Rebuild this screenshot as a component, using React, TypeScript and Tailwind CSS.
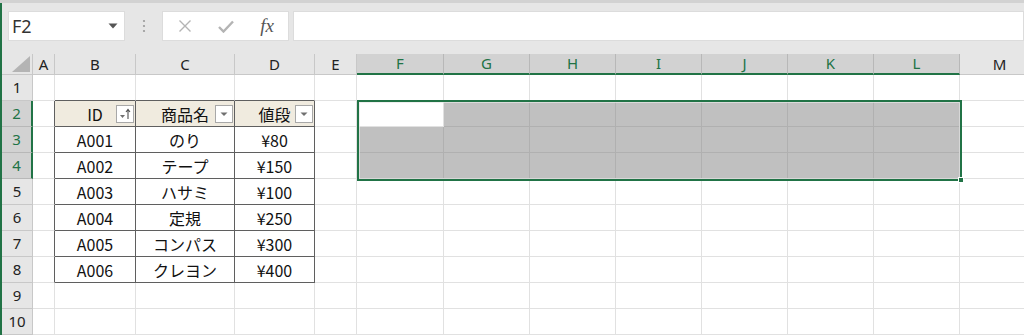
import React from 'react';

const COLS = [
  { key: 'A', w: 22 },
  { key: 'B', w: 81 },
  { key: 'C', w: 99 },
  { key: 'D', w: 80 },
  { key: 'E', w: 42 },
  { key: 'F', w: 87 },
  { key: 'G', w: 86 },
  { key: 'H', w: 86 },
  { key: 'I', w: 86 },
  { key: 'J', w: 86 },
  { key: 'K', w: 86 },
  { key: 'L', w: 86 },
  { key: 'M', w: 80 },
];

const ROWS = [1, 2, 3, 4, 5, 6, 7, 8, 9, 10];

const DATA: Record<number, [string, string, string]> = {
  3: ['A001', 'のり', '¥80'],
  4: ['A002', 'テープ', '¥150'],
  5: ['A003', 'ハサミ', '¥100'],
  6: ['A004', '定規', '¥250'],
  7: ['A005', 'コンパス', '¥300'],
  8: ['A006', 'クレヨン', '¥400'],
};

const SEL_COLS = ['F', 'G', 'H', 'I', 'J', 'K', 'L'];
const SEL_ROWS = [2, 3, 4];

const uiFont = { fontFamily: '"Noto Sans", "Liberation Sans", sans-serif' };
const cellFont = { fontFamily: '"Noto Sans CJK JP", "Noto Sans", sans-serif' };

function FilterButton({ sorted }: { sorted?: boolean }) {
  return (
    <div className="absolute right-[1px] top-[4px] flex h-[18px] w-[18px] items-center justify-center border border-[#a8a8a8] bg-white">
      {sorted ? (
        <svg width="14" height="12" viewBox="0 0 14 12">
          <path d="M2 7h5l-2.5 3z" fill="#707070" />
          <path d="M10 11V2M8 4l2-2.5L12 4" stroke="#505050" strokeWidth="1.1" fill="none" />
        </svg>
      ) : (
        <svg width="10" height="6" viewBox="0 0 10 6">
          <path d="M1.5 1.5h7l-3.5 3.5z" fill="#707070" />
        </svg>
      )}
    </div>
  );
}

function Cell({ col, row }: { col: string; row: number }) {
  const inTable = ['B', 'C', 'D'].includes(col) && row >= 2 && row <= 8;
  const selected = SEL_COLS.includes(col) && SEL_ROWS.includes(row);
  const active = col === 'F' && row === 2;

  const rightDark = inTable || (col === 'A' && row >= 2 && row <= 8);
  const bottomDark = inTable || (row === 1 && ['B', 'C', 'D'].includes(col));

  let bg = 'bg-white';
  if (selected && !active) bg = 'bg-[#c0c0c0]';
  if (inTable && row === 2) bg = 'bg-[#f0ebdf]';

  const rightCls = rightDark
    ? 'border-r-[#5f5f5f]'
    : selected && !active
      ? 'border-r-[#b0b0b0]'
      : 'border-r-[#e1e1e1]';
  const bottomCls = bottomDark
    ? 'border-b-[#5f5f5f]'
    : selected && !active
      ? 'border-b-[#b0b0b0]'
      : 'border-b-[#e1e1e1]';

  let content: React.ReactNode = null;
  if (inTable && row === 2) {
    const label = col === 'B' ? 'ID' : col === 'C' ? '商品名' : '値段';
    content = (
      <>
        <span className="w-full text-center">{label}</span>
        <FilterButton sorted={col === 'B'} />
      </>
    );
  } else if (inTable && DATA[row]) {
    const idx = col === 'B' ? 0 : col === 'C' ? 1 : 2;
    content = <span className="w-full text-center">{DATA[row][idx]}</span>;
  }

  return (
    <div
      className={`relative flex h-[26px] items-center border-r border-b text-[16px] text-[#111] ${bg} ${rightCls} ${bottomCls}`}
      style={cellFont}
    >
      {content}
    </div>
  );
}

export default function App() {
  return (
    <div className="h-[335px] w-[1024px] overflow-hidden bg-[#e6e6e6]">
      <div className="h-[3px] bg-[#d2d2d2]" />
      <div className="border-l-2 border-[#217346]">
        {/* formula bar */}
        <div className="flex h-[51px] items-start pt-[8px] pl-[6px]">
          <div className="flex h-[30px] w-[117px] items-center justify-between border border-[#dcdcdc] bg-white pl-[3px] pr-[6px]">
            <span className="text-[18px] text-[#333]" style={uiFont}>F2</span>
            <svg width="10" height="6" viewBox="0 0 10 6">
              <path d="M0.5 0.5h9l-4.5 5z" fill="#555" />
            </svg>
          </div>
          <div className="flex h-[30px] w-[37px] items-center justify-center">
            <svg width="4" height="14" viewBox="0 0 4 14">
              <circle cx="2" cy="2" r="1.1" fill="#9a9a9a" />
              <circle cx="2" cy="7" r="1.1" fill="#9a9a9a" />
              <circle cx="2" cy="12" r="1.1" fill="#9a9a9a" />
            </svg>
          </div>
          <div className="flex h-[30px] w-[127px] items-center border border-[#dcdcdc] bg-white">
            <div className="flex w-[42px] justify-center pl-[2px]">
              <svg width="14" height="14" viewBox="0 0 14 14">
                <path d="M1.5 1.5l11 11M12.5 1.5l-11 11" stroke="#b4b4b4" strokeWidth="1.4" />
              </svg>
            </div>
            <div className="flex w-[42px] justify-center">
              <svg width="16" height="13" viewBox="0 0 16 13">
                <path d="M1 7l4.5 4.5L15 1.5" stroke="#b4b4b4" strokeWidth="2.4" fill="none" />
              </svg>
            </div>
            <div className="flex w-[42px] justify-center">
              <span
                className="text-[19px] italic text-[#555]"
                style={{ fontFamily: '"Liberation Serif", "DejaVu Serif", serif' }}
              >
                fx
              </span>
            </div>
          </div>
          <div className="ml-[4px] h-[30px] flex-1 border border-[#dcdcdc] bg-white" />
        </div>

        {/* sheet */}
        <div className="relative bg-white">
          <div className="grid grid-cols-[31px_22px_81px_99px_80px_42px_87px_86px_86px_86px_86px_86px_86px_80px]">
            {/* header row */}
            <div className="flex h-[21px] items-end justify-end border-r border-b border-[#c8c8c8] bg-[#e6e6e6] pr-[2px] pb-[2px]">
              <svg width="18" height="16" viewBox="0 0 18 16">
                <path d="M18 0V16H0z" fill="#b4b4b4" />
              </svg>
            </div>
            {COLS.map((c) => {
              const sel = SEL_COLS.includes(c.key);
              return (
                <div
                  key={c.key}
                  className={`flex h-[21px] items-center justify-center border-r text-[15px] ${
                    sel
                      ? 'border-b-2 border-r-[#b8b8b8] border-b-[#217346] bg-[#d2d2d2] text-[#217346]'
                      : 'border-b border-r-[#c8c8c8] border-b-[#c8c8c8] bg-[#e6e6e6] text-[#222]'
                  }`}
                  style={uiFont}
                >
                  {c.key}
                </div>
              );
            })}

            {ROWS.map((r) => {
              const sel = SEL_ROWS.includes(r);
              return (
                <React.Fragment key={r}>
                  <div
                    className={`flex h-[26px] items-center justify-center border-b text-[15px] ${
                      sel
                        ? 'border-r-2 border-r-[#217346] border-b-[#b8b8b8] bg-[#d2d2d2] text-[#217346]'
                        : 'border-r border-r-[#c8c8c8] border-b-[#c8c8c8] bg-[#e6e6e6] text-[#222]'
                    }`}
                    style={uiFont}
                  >
                    {r}
                  </div>
                  {COLS.map((c) => (
                    <Cell key={c.key} col={c.key} row={r} />
                  ))}
                </React.Fragment>
              );
            })}
          </div>

          {/* selection outline */}
          <div className="pointer-events-none absolute left-[355px] top-[46px] h-[81px] w-[605px] border-2 border-[#217346]">
            <div className="absolute inset-0 border border-[#e8e8e8]/70" />
            <div className="absolute -right-[4px] -bottom-[4px] h-[6px] w-[6px] border border-white bg-[#217346]" />
          </div>
        </div>
      </div>
    </div>
  );
}
